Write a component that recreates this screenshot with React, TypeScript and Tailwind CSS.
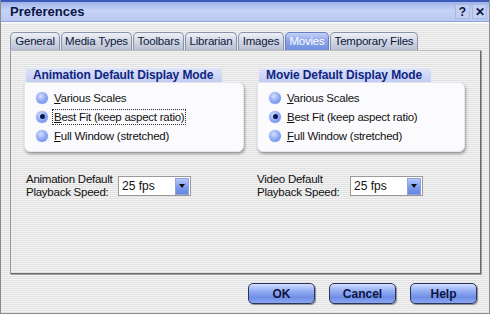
import React from "react";

const stripes =
  "bg-[repeating-linear-gradient(to_bottom,#f4f4f4_0px,#f4f4f4_1px,#e1e1e1_1px,#e1e1e1_2px)]";

function Tab({ label, w, active }: { label: string; w: number; active?: boolean }) {
  return (
    <div
      style={{ width: w }}
      className={
        "h-[18px] rounded-t-[5px] border border-b-0 flex items-center justify-center text-[11.5px] tracking-[-0.2px] leading-none whitespace-nowrap " +
        (active
          ? "border-[#6a7fc0] bg-[linear-gradient(to_bottom,#c4d2fa,#8aa3e8_50%,#7290e0)] text-white"
          : "border-[#8b93a8] bg-[linear-gradient(to_bottom,#eef0f6,#cfd4e2_55%,#b9c0d2)] text-[#0c1a3a]")
      }
    >
      {label}
    </div>
  );
}

function Radio({ checked, u, rest, focus }: { checked?: boolean; u: string; rest: string; focus?: boolean }) {
  return (
    <div className="h-[19px] flex items-center">
      <div className="w-[12px] h-[12px] rounded-full bg-[radial-gradient(circle_at_40%_35%,#d6e0ff_0%,#93acf5_45%,#5f80e0_100%)] shadow-[0_0_1px_#8aa0e0] flex items-center justify-center">
        {checked && <div className="w-[5px] h-[5px] rounded-full bg-[#0a1550]" />}
      </div>
      <div className={"ml-[5px] text-[11.5px] tracking-[-0.25px] text-[#111] leading-[14px] px-[1px] whitespace-nowrap " + (focus ? "outline outline-1 outline-dotted outline-[#333]" : "")}>
        <span className="underline">{u}</span>
        {rest}
      </div>
    </div>
  );
}

function Group({ title, headW, boxW, variant }: { title: string; headW: number; boxW: number; variant: "a" | "m" }) {
  return (
    <div className="flex flex-col" style={{ width: boxW }}>
      <div
        style={{ width: headW }}
        className="h-[14px] ml-[2px] rounded-t-[4px] bg-[linear-gradient(to_bottom,#dde3fa,#c3cdf2)] text-[#0f2580] text-[12px] tracking-[-0.1px] font-bold leading-[14px] pl-[7px] whitespace-nowrap"
      >
        {title}
      </div>
      <div className="h-[70px] rounded-[6px] rounded-tl-none bg-[#fbfbfd] shadow-[1px_2px_3px_rgba(0,0,0,0.35)] border border-[#e4e6ee] pt-[5px] pl-[11px]">
        <Radio u="V" rest="arious Scales" />
        <Radio checked u="B" rest="est Fit (keep aspect ratio)" focus={variant === "a"} />
        <Radio u="F" rest="ull Window (stretched)" />
      </div>
    </div>
  );
}

function Combo() {
  return (
    <div className="w-[73px] h-[20px] border border-[#9a9a9a] bg-white flex items-center p-[1px]">
      <div className="flex-1 text-[12px] text-[#111] pl-[2px] leading-none">25 fps</div>
      <div className="w-[14px] h-[17px] bg-[linear-gradient(to_bottom,#b6c8fb,#7e9bee_55%,#6686e0)] border border-[#8fa4dc] flex items-center justify-center">
        <div className="w-0 h-0 border-l-[3px] border-r-[3px] border-t-[4px] border-l-transparent border-r-transparent border-t-[#111]" />
      </div>
    </div>
  );
}

function Btn({ label }: { label: string }) {
  return (
    <div className="w-[67px] h-[21px] rounded-[5px] border border-[#2b3558] bg-[linear-gradient(to_bottom,#d2ddff_0%,#97b0f5_35%,#6f8ee6_70%,#8aa6f2_100%)] shadow-[1px_1px_1px_rgba(0,0,0,0.4)] flex items-center justify-center text-[12px] font-bold text-[#0d1640]">
      {label}
    </div>
  );
}

export default function App() {
  return (
    <div className="w-[492px] h-[315px] overflow-hidden bg-white font-['Liberation_Sans',Arial,sans-serif]">
      <div className="w-[490px] h-[314px] flex flex-col border border-[#8b8b8b] border-t-0">
        {/* Title bar */}
        <div className="h-[22px] flex items-center justify-between pl-[9px] pr-[2px] border-t-[2px] border-t-[#3c5bb8] border-b border-b-[#8da0d8] bg-[linear-gradient(to_bottom,#9fb3ea,#c7d3f6_45%,#b9c8f2)]">
          <div className="text-[13px] font-bold text-[#0a1646] leading-none">Preferences</div>
          <div className="flex gap-[2px]">
            <div className="w-[15px] h-[15px] bg-[#c4d0f3] border border-[#a9b7e2] flex items-center justify-center text-[12px] font-bold text-[#0a1646] leading-none">?</div>
            <div className="w-[15px] h-[15px] bg-[#c4d0f3] border border-[#a9b7e2] flex items-center justify-center text-[12px] font-bold text-[#0a1646] leading-none">✕</div>
          </div>
        </div>
        {/* Body */}
        <div className={"flex-1 flex flex-col pt-[9px] pl-[9px] border-t border-white " + stripes}>
          <div className="flex items-end gap-[1px] h-[18px]">
            <Tab label="General" w={50} />
            <Tab label="Media Types" w={71} />
            <Tab label="Toolbars" w={51} />
            <Tab label="Librarian" w={52} />
            <Tab label="Images" w={46} />
            <Tab label="Movies" w={44} active />
            <Tab label="Temporary Files" w={88} />
          </div>
          <div className={"w-[471px] h-[224px] border border-l-[#9a9a9a] border-t-[#b8b8b8] border-r-[#6a6a6a] border-b-[#6a6a6a] shadow-[1px_1px_0_#a0a0a0] pt-[17px] pl-[13px] flex flex-col " + stripes}>
            <div className="flex gap-[13px]">
              <Group title="Animation Default Display Mode" headW={196} boxW={220} variant="a" />
              <Group title="Movie Default Display Mode" headW={172} boxW={208} variant="m" />
            </div>
            <div className="flex mt-[21px]">
              <div className="w-[233px] flex items-center pl-[2px]">
                <div className="w-[92px] text-[11.5px] tracking-[-0.25px] leading-[13px] text-[#111] whitespace-nowrap">Animation Default<br />Playback Speed:</div>
                <Combo />
              </div>
              <div className="flex items-center">
                <div className="w-[93px] text-[11.5px] tracking-[-0.25px] leading-[13px] text-[#111] whitespace-nowrap">Video Default<br />Playback Speed:</div>
                <Combo />
              </div>
            </div>
          </div>
          <div className="flex justify-end gap-[14px] pr-[12px] mt-[9px]">
            <Btn label="OK" />
            <Btn label="Cancel" />
            <Btn label="Help" />
          </div>
        </div>
      </div>
    </div>
  );
}
